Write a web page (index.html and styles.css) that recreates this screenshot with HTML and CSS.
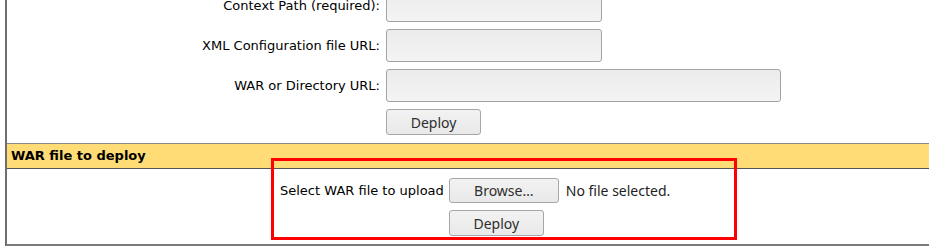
FILE: index.html
```html
<!DOCTYPE html>
<html lang="en">
<head>
    <meta charset="UTF-8">
    <title>Tomcat Web Application Manager</title>
    <link rel="stylesheet" href="styles.css">
</head>
<body>
    <div class="manager">
        <form class="deploy-dir">
            <label class="row-label" for="deployPath">Context Path (required):</label>
            <div class="row-field"><input type="text" id="deployPath" class="field short"></div>

            <label class="row-label" for="deployConfig">XML Configuration file URL:</label>
            <div class="row-field"><input type="text" id="deployConfig" class="field short"></div>

            <label class="row-label" for="deployWarUrl">WAR or Directory URL:</label>
            <div class="row-field"><input type="text" id="deployWarUrl" class="field long"></div>

            <span class="row-label"></span>
            <div class="row-field"><button type="button" class="btn deploy">Deploy</button></div>
        </form>

        <div class="section-title">WAR file to deploy</div>

        <form class="deploy-war">
            <span class="upload-label">Select WAR file to upload</span>
            <div class="upload-field">
                <button type="button" class="btn browse">Browse…</button>
                <span class="file-name">No file selected.</span>
            </div>
            <span></span>
            <div class="upload-field">
                <button type="submit" class="btn deploy">Deploy</button>
            </div>
        </form>
    </div>

    <div class="highlight"></div>
</body>
</html>
```

FILE: styles.css
```css
html, body {
    overflow: hidden;
}
body {
    margin: 0;
    background: #fff;
    color: #000;
    font-family: "DejaVu Sans", sans-serif;
    font-size: 13px;
}
.manager {
    margin-left: 5px;
    width: 1000px;
    border-left: 2px solid #6e6e6e;
    border-bottom: 2px solid #7a7a7a;
}
.deploy-dir {
    display: grid;
    grid-template-columns: 373px 1fr;
    column-gap: 6px;
    row-gap: 7px;
    margin-top: -11px;
    padding-bottom: 8px;
}
.row-label {
    align-self: center;
    text-align: right;
}
.row-field {
    display: flex;
    align-items: center;
}
.field {
    box-sizing: border-box;
    height: 33px;
    border: 1px solid #a3a3a3;
    border-radius: 3px;
    background: linear-gradient(#ebebeb, #f4f4f4);
    margin: 0;
}
.field.short {
    width: 216px;
}
.field.long {
    width: 395px;
}
.btn {
    box-sizing: border-box;
    border: 1px solid #a6a6a6;
    border-radius: 3px;
    background: linear-gradient(#f2f2f2, #e9e9e9);
    color: #2e2e2e;
    font-family: "Noto Sans", sans-serif;
    font-size: 14px;
    padding: 0;
    margin: 0;
}
.btn.deploy {
    width: 95px;
    height: 26px;
}
.btn.browse {
    width: 110px;
    height: 25px;
}
.section-title {
    border-top: 1px solid #8a8a8a;
    border-bottom: 1px solid #555;
    background: #ffdc75;
    height: 24px;
    line-height: 24px;
    padding-left: 4px;
    font-weight: bold;
}
.deploy-war {
    display: grid;
    grid-template-columns: auto auto;
    justify-content: start;
    column-gap: 5px;
    row-gap: 7px;
    padding: 9px 0 8px 273px;
}
.upload-label {
    align-self: center;
    text-align: right;
}
.upload-field {
    display: flex;
    align-items: center;
    gap: 7px;
}
.file-name {
    font-family: "Noto Sans", sans-serif;
    font-size: 14px;
    color: #1e1e1e;
}
.highlight {
    position: absolute;
    left: 271px;
    top: 158px;
    width: 466px;
    height: 82px;
    box-sizing: border-box;
    border: 3px solid #ff0000;
}
```
